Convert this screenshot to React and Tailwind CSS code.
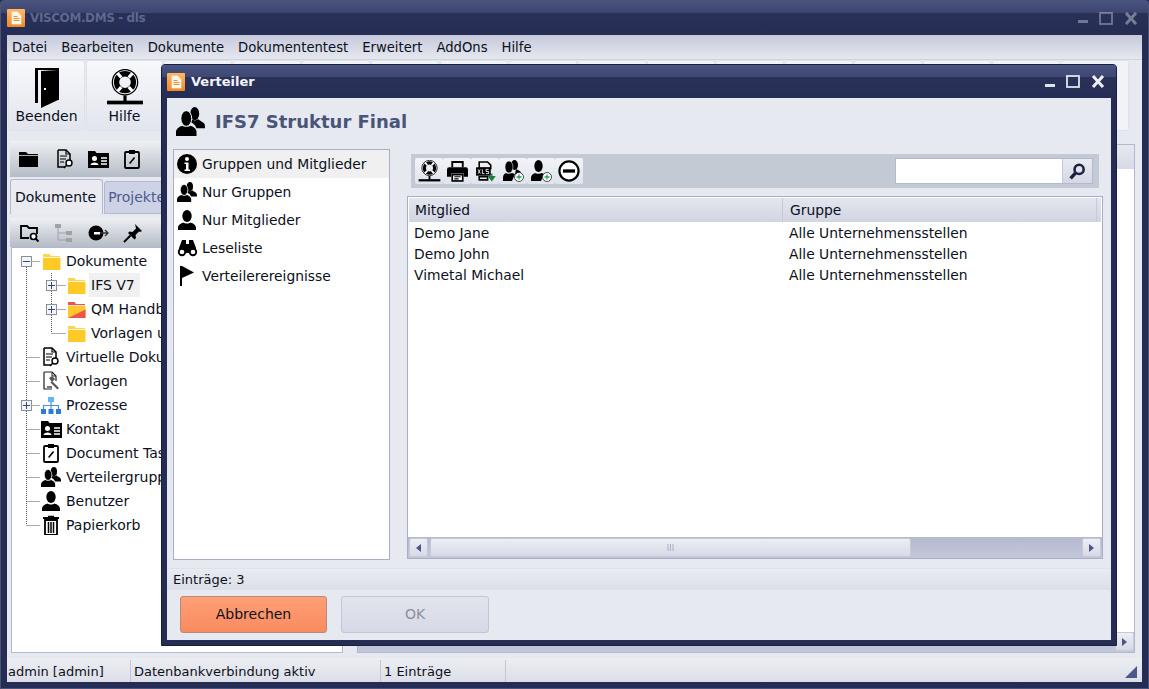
import React from "react";

const S = ({ w = 24, h = 24, vb = "0 0 24 24", children, className = "" }) => (
  <svg width={w} height={h} viewBox={vb} className={"shrink-0 " + className}>{children}</svg>
);

const Doc = () => (
  <S w={18} h={18} vb="0 0 18 18">
    <defs><linearGradient id="og" x1="0" y1="0" x2="0" y2="1"><stop offset="0" stopColor="#ffb866" /><stop offset="1" stopColor="#f08a2c" /></linearGradient></defs>
    <rect width="18" height="18" rx="1" fill="url(#og)" />
    <path d="M5 3h5.5L14 6.5V15H5z" fill="#fff4e2" stroke="#fff" strokeWidth=".6" />
    <path d="M6.5 7.5h4M6.5 9.5h6M6.5 11.5h6" stroke="#e0934a" strokeWidth="1" />
  </S>
);
const Door = () => (
  <S w={24} h={42} vb="0 0 24 42">
    <path d="M0 1h24v32h-2V3H3v33H0z" fill="#000" />
    <path d="M6 4l17-1v30L6 41z" fill="#000" />
    <rect x="9" y="21" width="2" height="2" fill="#fff" />
  </S>
);
const Buoy = ({ s = 36 }) => (
  <S w={s} h={s} vb="0 0 36 36">
    <circle cx="18" cy="12.500" r="8" fill="none" stroke="#000" strokeWidth="5" />
    <path d="M10.500 3.500l4 4.500M25.500 3.500l-4 4.500M10.500 21.500l4-4.500M25.500 21.500l-4-4.500" stroke="#fff" strokeWidth="3" />
    <circle cx="18" cy="12.500" r="12" fill="none" stroke="#000" strokeWidth="1.200" />
    <rect x="16.500" y="25" width="3" height="6" fill="#000" />
    <rect x="1" y="30" width="34" height="3.500" fill="#000" />
  </S>
);
const FolderBlack = () => (
  <S w={19} h={16} vb="0 0 19 16"><path d="M0 1h7l2 2h10v13H0z" fill="#000" /><path d="M0 4.500h19" stroke="#fff" strokeWidth=".7" /></S>
);
const DocSearch = ({ s = 20 }) => (
  <S w={s} h={s} vb="0 0 20 20">
    <path d="M3 1h8l4 4v6M3 1v17h7" fill="none" stroke="#000" strokeWidth="1.500" />
    <path d="M11 1v4h4M5 7h7M5 10h6M5 13h4" fill="none" stroke="#000" strokeWidth="1.200" />
    <circle cx="14" cy="14" r="3" fill="#fff" stroke="#000" strokeWidth="1.400" />
    <path d="M12 16l-3 3" stroke="#000" strokeWidth="1.600" />
  </S>
);
const Card = ({ w = 21, h = 17 }) => (
  <S w={w} h={h} vb="0 0 21 17">
    <path d="M0 0h7l1.500 2H21v15H0z" fill="#000" />
    <circle cx="6.500" cy="7.500" r="2.500" fill="#fff" />
    <path d="M2.500 14c0-3.500 8-3.500 8 0z" fill="#fff" />
    <path d="M13 7h6M13 10h6M13 13h6" stroke="#fff" strokeWidth="1.500" />
  </S>
);
const Clip = ({ s = 20 }) => (
  <S w={s} h={s} vb="0 0 20 20">
    <rect x="3" y="3" width="14" height="16" rx="1" fill="none" stroke="#000" strokeWidth="1.800" />
    <rect x="7" y="1" width="6" height="4" fill="#000" />
    <path d="M7 14l5-6 1.200 1-5 6z" fill="#000" />
  </S>
);
const FindFolder = () => (
  <S w={20} h={20} vb="0 0 20 20">
    <path d="M9 15H1V3h6l2 2h8v6" fill="none" stroke="#000" strokeWidth="1.800" />
    <circle cx="13.500" cy="13.500" r="3" fill="#fff" stroke="#000" strokeWidth="1.700" />
    <path d="M15.500 15.500l3 3" stroke="#000" strokeWidth="2" />
  </S>
);
const TreeGrey = () => (
  <S w={20} h={20} vb="0 0 20 20" >
    <rect x="1" y="1" width="6" height="4" fill="#9fa3a8" />
    <rect x="12" y="8" width="6" height="4" fill="#9fa3a8" />
    <rect x="12" y="15" width="6" height="4" fill="#9fa3a8" />
    <path d="M4 5v12h8M4 10h8" fill="none" stroke="#9fa3a8" />
  </S>
);
const CircleArrow = () => (
  <S w={21} h={20} vb="0 0 21 20">
    <circle cx="8" cy="10" r="7.500" fill="#000" />
    <rect x="6" y="9" width="6" height="2.500" fill="#fff" />
    <path d="M12 10h8M17 7l3 3-3 3" fill="none" stroke="#333" strokeWidth="1.300" />
  </S>
);
const Pin = () => (
  <S w={20} h={20} vb="0 0 20 20">
    <path d="M12 1l7 7-2 1-1-.5-3.500 3.500.5 3-1.500 1.500L5 10l1.500-1.500 3 .5L13 5.500 12.500 3z" fill="#000" />
    <path d="M7.500 12.500L1 19" stroke="#000" strokeWidth="2" />
  </S>
);
const Users = ({ s = 20 }) => (
  <S w={s} h={s} vb="0 0 24 24">
    <ellipse cx="15.500" cy="5.500" rx="3.700" ry="5.500" fill="#000" />
    <path d="M13 10c1 1.500 4 1.500 5.500 0 .5 1.500 5.500 2.500 5.500 5.500v2h-7c-1-2.500-3-4-5-5z" fill="#000" />
    <ellipse cx="8.500" cy="9.500" rx="4.500" ry="6.500" fill="#000" stroke="#fff" strokeWidth=".8" />
    <path d="M0 24v-3c0-3 2.500-4.500 5-5.500 1.500 1.200 5.500 1.200 7 0 3 1 5 2.500 5 5.500v3z" fill="#000" />
  </S>
);
const User = ({ s = 20 }) => (
  <S w={s} h={s} vb="0 0 20 20">
    <ellipse cx="10" cy="6" rx="4.700" ry="6" fill="#000" />
    <path d="M1 20v-2c0-3 2.500-4.500 5.500-5.500 1.500 1.300 5.500 1.300 7 0 3 1 5.500 2.500 5.500 5.500v2z" fill="#000" />
  </S>
);
const Info = () => (
  <S w={20} h={20} vb="0 0 20 20">
    <circle cx="10" cy="10" r="10" fill="#000" />
    <circle cx="10" cy="5" r="2" fill="#fff" />
    <path d="M7.500 8.500h4v7h1.500v1.500H7.500v-1.500H9v-5.500H7.500z" fill="#fff" />
  </S>
);
const Binoculars = () => (
  <S w={21} h={18} vb="0 0 21 18">
    <path d="M2 9l3-8h4v4h3V1h4l3 8v5H2z" fill="#000" />
    <circle cx="5" cy="13" r="4.200" fill="#000" />
    <circle cx="16" cy="13" r="4.200" fill="#000" />
    <circle cx="5" cy="13" r="2.300" fill="#fff" />
    <circle cx="16" cy="13" r="2.300" fill="#fff" />
  </S>
);
const Flag = () => (
  <S w={16} h={20} vb="0 0 16 20">
    <rect x="1" y="0" width="2" height="20" fill="#000" />
    <path d="M3 0l12 6.500L3 12z" fill="#000" />
  </S>
);
const Folder = ({ red }) => (
  <S w={19} h={17} vb="0 0 19 17">
    <path d="M1 1h6.500l1.500 2h9v3H1z" fill={red ? "#ef5350" : "#ffd54f"} />
    <rect x="1" y="5" width="17.500" height="12" fill="#ffca28" />
    {red && <path d="M18.500 8.500L1 17h17.500z" fill="#ef5350" />}
    <path d="M1 4.500h17.500" stroke="#fff" strokeWidth=".8" />
  </S>
);
const Gavel = () => (
  <S w={20} h={20} vb="0 0 20 20">
    <path d="M3 1h8l4 4v5M3 1v17h8" fill="none" stroke="#222" strokeWidth="1.200" />
    <path d="M11 1v4h4" fill="none" stroke="#222" />
    <path d="M8 7l3-2 3 3-3 3z" fill="#555" />
    <path d="M11 10l7 7-1.500 1.500-7-7z" fill="#555" />
    <path d="M6 15h5v2H6z" fill="#777" />
  </S>
);
const Org = () => (
  <S w={20} h={17} vb="0 0 20 17">
    <rect x="7" y="0" width="6" height="5" fill="#64b5f6" />
    <rect x="0" y="12" width="5" height="5" fill="#2f7ad6" />
    <rect x="7.500" y="12" width="5" height="5" fill="#2f7ad6" />
    <rect x="15" y="12" width="5" height="5" fill="#2f7ad6" />
    <path d="M10 5v7M2.500 12V8.500h15V12" fill="none" stroke="#4a90e2" strokeWidth="1.200" />
  </S>
);
const Trash = () => (
  <S w={18} h={20} vb="0 0 18 20">
    <path d="M6 2V.8h6V2h5v2H1V2z" fill="#000" />
    <path d="M3 5h12v15H3z" fill="none" stroke="#000" strokeWidth="1.800" />
    <path d="M6.500 7v11M9 7v11M11.500 7v11" stroke="#000" strokeWidth="1.500" />
  </S>
);
const Printer = () => (
  <S w={21} h={21} vb="0 0 20 20">
    <path d="M5 6V1h10v5" fill="none" stroke="#000" strokeWidth="1.800" />
    <path d="M2 6h16a2 2 0 0 1 2 2v7h-4v-3H4v3H0V8a2 2 0 0 1 2-2z" fill="#000" />
    <rect x="5" y="13" width="10" height="6" fill="#fff" stroke="#000" strokeWidth="1.600" />
    <path d="M7 15h6M7 17h4" stroke="#000" />
  </S>
);
const Xls = () => (
  <S w={21} h={21} vb="0 0 20 20">
    <path d="M4 1h8l3 3v3H4zM4 15h8v3H4z" fill="none" stroke="#000" strokeWidth="1.500" />
    <rect x="1" y="6" width="14" height="8" fill="#000" />
    <path d="M3 8l2 4M5 8l-2 4M7 8v4h2M13 8H10.500v2H13v2h-2.500" fill="none" stroke="#fff" strokeWidth=".8" />
    <path d="M16 12v5M13.500 15l2.500 3.500 2.500-3.500z" fill="#16803c" stroke="#16803c" strokeWidth="1.300" />
  </S>
);
const Plus = () => (
  <svg x="12" y="12" width="10" height="10" viewBox="0 0 10 10">
    <circle cx="5" cy="5" r="4.500" fill="#fff" stroke="#222" strokeWidth=".8" />
    <path d="M5 2.500v5M2.500 5h5" stroke="#22a35a" strokeWidth="1.300" />
  </svg>
);
const UsersAdd = () => (
  <S w={22} h={22} vb="0 0 22 22">
    <ellipse cx="12.500" cy="5" rx="3.500" ry="5" fill="#000" />
    <ellipse cx="7" cy="7" rx="4" ry="6" fill="#000" stroke="#e6e8ee" strokeWidth=".6" />
    <path d="M1 21v-3c0-3 1-4 3-5 1 1 4 1 6 0l3 1-3 7z" fill="#000" />
    <path d="M14 9c2 1 5 2 5 4v1h-6z" fill="#000" />
    <Plus />
  </S>
);
const UserAdd = () => (
  <S w={22} h={22} vb="0 0 22 22">
    <ellipse cx="8.500" cy="6" rx="4.200" ry="6" fill="#000" />
    <path d="M1 21v-3c0-3 2-4 4-5 1 1 5 1 7 0l2 1-3 7z" fill="#000" />
    <Plus />
  </S>
);
const MinusC = () => (
  <S w={22} h={22} vb="0 0 20 20">
    <circle cx="10" cy="10" r="8.700" fill="#fff" stroke="#000" strokeWidth="2" />
    <rect x="4.500" y="8.500" width="11" height="3" fill="#000" />
  </S>
);
const Search = () => (
  <S w={17} h={17} vb="0 0 16 16">
    <circle cx="9.500" cy="6" r="4.300" fill="none" stroke="#1c2240" strokeWidth="2.400" />
    <path d="M6 9.500L1.500 14.500" stroke="#1c2240" strokeWidth="3.200" />
  </S>
);
const Box = ({ minus, left }) => (
  <span className={"absolute w-[11px] h-[11px] border border-[#8a8f9c] bg-[#f4f5f8] flex items-center justify-center " + left}>
    <svg width="9" height="9" viewBox="0 0 9 9">
      <path d="M1 4.500h7" stroke="#2e4a8a" />
      {!minus && <path d="M4.500 1v7" stroke="#2e4a8a" />}
    </svg>
  </span>
);

const treeItems = [
  { t: "Dokumente", icon: <Folder />, pad: "pl-[29px]", box: "minus" },
  { t: "IFS V7", icon: <Folder />, pad: "pl-[55px]", box: "plus2", hi: true },
  { t: "QM Handbuch", icon: <Folder red />, pad: "pl-[55px]", box: "plus2" },
  { t: "Vorlagen und Muster", icon: <Folder />, pad: "pl-[55px]" },
  { t: "Virtuelle Dokumente", icon: <DocSearch />, pad: "pl-[29px]" },
  { t: "Vorlagen", icon: <Gavel />, pad: "pl-[29px]" },
  { t: "Prozesse", icon: <Org />, pad: "pl-[29px]", box: "plus" },
  { t: "Kontakt", icon: <Card />, pad: "pl-[29px]" },
  { t: "Document Tasks", icon: <Clip />, pad: "pl-[29px]" },
  { t: "Verteilergruppen", icon: <Users />, pad: "pl-[29px]" },
  { t: "Benutzer", icon: <User />, pad: "pl-[29px]" },
  { t: "Papierkorb", icon: <Trash />, pad: "pl-[29px]" },
];

const listItems = [
  ["Gruppen und Mitglieder", <Info />],
  ["Nur Gruppen", <Users />],
  ["Nur Mitglieder", <User />],
  ["Leseliste", <Binoculars />],
  ["Verteilerereignisse", <Flag />],
];

const members = ["Demo Jane", "Demo John", "Vimetal Michael"];

const RibbonBtn = ({ icon, label }) => (
  <div className="w-[77px] h-[71px] rounded-[3px] border border-[#dfe2ea] bg-gradient-to-b from-[#f7f8fb] to-[#e2e5ed] flex flex-col items-center pt-[6px] text-[14px] leading-[16px]">
    <div className="h-[42px] shrink-0 flex items-center">{icon}</div>
    <span className="-mt-[1px]">{label}</span>
  </div>
);

const Tb = ({ children }) => (
  <div className="w-[28px] h-[26px] rounded-[2px] bg-gradient-to-b from-[#f2f4f7] to-[#dfe3ec] flex items-center justify-center">{children}</div>
);

const Arrow = ({ right }) => (
  <div className="w-[19px] h-[19px] rounded-[2px] border border-[#c5c9d8] bg-gradient-to-b from-[#eceef3] to-[#d7dae6] flex items-center justify-center">
    <svg width="5" height="8" viewBox="0 0 5 8"><path d={right ? "M0 0l5 4-5 4z" : "M5 0L0 4l5 4z"} fill="#4a5489" /></svg>
  </div>
);

const WinBtns = ({ dim }) => (
  <div className={"flex items-center gap-[11px] " + (dim ? "opacity-40" : "")}>
    <svg width="10" height="10" viewBox="0 0 10 10"><rect y="7" width="10" height="3" fill="#dfe3ee" /></svg>
    <svg width="14" height="13" viewBox="0 0 14 13"><rect x="1" y="1" width="12" height="11" fill="none" stroke="#dfe3ee" strokeWidth="1.800" /></svg>
    <svg width="14" height="13" viewBox="0 0 14 13"><path d="M2 1l10 11M12 1L2 12" stroke="#eef0f6" strokeWidth="3" /></svg>
  </div>
);

export default function App() {
  return (
    <div className="relative w-[1149px] h-[689px] overflow-hidden bg-[#262d55] text-[#0c1020] text-[14px]" style={{ fontFamily: '"DejaVu Sans", sans-serif' }}>
      {/* main window */}
      <div className="flex flex-col h-full border border-[#4b5478] rounded-t-[4px]">
        <div className="h-[34px] shrink-0 flex items-center justify-between pl-[6px] pr-[10px] bg-[linear-gradient(#4a5480_0,#3b4570_35%,#2a3159_36%,#262d55_100%)]">
          <div className="flex items-center gap-[5px]">
            <Doc />
            <span className="font-bold text-[12px] tracking-[-0.4px] text-[#5d688f]">VISCOM.DMS - dls</span>
          </div>
          <WinBtns dim />
        </div>
        <div className="flex-1 flex flex-col mx-[6px] mb-[6px] bg-[#e6e9ef] min-h-0">
          <div className="h-[25px] shrink-0 flex items-center gap-[14px] pl-[5px] pt-[2px] text-[13.2px] bg-gradient-to-b from-[#c5c9db] to-[#e6e8ef] border-b border-[#d0d4e0]">
            {["Datei", "Bearbeiten", "Dokumente", "Dokumententest", "Erweitert", "AddOns", "Hilfe"].map((m) => (
              <span key={m}>{m}</span>
            ))}
          </div>
          <div className="h-[73px] shrink-0 flex gap-[1px] pl-[1px] bg-[#e6e9ef]">
            <RibbonBtn icon={<Door />} label="Beenden" />
            <RibbonBtn icon={<Buoy s={38} />} label="Hilfe" />
            {Array.from({ length: 14 }).map((_, i) => (
              <div key={i} className="w-[68px] h-[71px] rounded-[3px] border border-[#dfe2ea] bg-[#f2f3f7]" />
            ))}
          </div>
          <div className="flex-1 flex min-h-0 pt-[8px]">
            {/* left panel */}
            <div className="w-[335px] shrink-0 flex flex-col pl-[3px] pb-[5px]">
              <div className="h-[36px] shrink-0 flex items-center pl-[9px] bg-gradient-to-b from-[#eef0f3] to-[#b5bcc6] mr-[1px]">
                <FolderBlack />
                <span className="ml-[17px] flex"><DocSearch /></span>
                <span className="ml-[13px] flex"><Card /></span>
                <span className="ml-[13px] flex"><Clip /></span>
              </div>
              <div className="h-[37px] shrink-0 flex items-end pt-[3px]">
                <div className="h-[35px] pl-[4px] pr-[6px] flex items-center border border-b-0 border-[#b3b8d0] rounded-t-[3px] bg-[#e9ebf1]">Dokumente</div>
                <div className="h-[33px] pl-[3px] pr-[20px] flex items-center border border-[#b3b8d0] rounded-t-[3px] bg-[#cdd2e6] text-[#4f5a8d] ml-[1px]">Projekte</div>
              </div>
              <div className="h-[29px] shrink-0 flex items-center gap-[14px] pl-[10px] bg-gradient-to-b from-[#eef0f3] to-[#b5bcc6] mt-[4px] mr-[1px]">
                <FindFolder />
                <TreeGrey />
                <CircleArrow />
                <Pin />
              </div>
              <div className="relative flex-1 ml-[1px] mr-[-1px] bg-white border border-[#b3b8d0] pt-[1px]">
                <svg className="absolute left-0 top-0" width="120" height="300">
                  <path d="M14.500 13V277M14.500 13.500H28M14.500 109.500H28M14.500 133.500H28M14.500 157.500H28M14.500 181.500H28M14.500 205.500H28M14.500 229.500H28M14.500 253.500H28M14.500 277.500H28M39.500 25V85M39.500 37.500H54M39.500 61.500H54M39.500 85.500H54" stroke="#555" strokeDasharray="1 1" fill="none" />
                </svg>
                {treeItems.map((it) => (
                  <div key={it.t} className={"relative h-[24px] flex items-center gap-[5px] " + it.pad}>
                    {it.box === "minus" && <Box minus left="left-[9px]" />}
                    {it.box === "plus" && <Box left="left-[9px]" />}
                    {it.box === "plus2" && <Box left="left-[34px]" />}
                    <span className={(it.pad === "pl-[55px]" ? "w-[19px]" : "w-[20px]") + " flex justify-center relative"}>{it.icon}</span>
                    <span className={"whitespace-nowrap leading-[24px] " + (it.hi ? "bg-[#f0f0f0] -ml-[2px] pl-[2px] pr-[5px]" : "")}>{it.t}</span>
                  </div>
                ))}
              </div>
            </div>
            <div className="flex-1 flex flex-col pl-[15px] pr-[7px] pb-[5px] pt-[3px]">
              <div className="flex-1 flex flex-col border border-[#b3b8d0] bg-white">
                <div className="h-[24px] bg-gradient-to-b from-[#e7e9f0] to-[#d6d9e6]" />
                <div className="flex-1" />
                <div className="h-[20px] bg-gradient-to-b from-[#b6bad0] to-[#c3c7da] flex justify-end"><Arrow right /></div>
              </div>
            </div>
          </div>
          <div className="h-[24px] shrink-0 flex items-end text-[13px] bg-gradient-to-b from-[#eceef3] to-[#dcdfe8] relative">
            <div className="w-[124px] pl-[1px] pt-[2px] h-[22px] flex items-center border-r border-[#c2c6d6]">admin [admin]</div>
            <div className="w-[250px] pl-[3px] pt-[2px] h-[22px] flex items-center border-r border-[#c2c6d6]">Datenbankverbindung aktiv</div>
            <div className="w-[125px] pl-[3px] pt-[2px] h-[22px] flex items-center border-r border-[#c2c6d6]">1 Einträge</div>
            <svg className="absolute right-[5px] bottom-[4px]" width="12" height="12" viewBox="0 0 12 12"><path d="M12 0v12H0z" fill="#4d5689" /></svg>
          </div>
        </div>
      </div>

      {/* dialog window */}
      <div className="absolute left-[161px] top-[64px] w-[956px] h-[582px] flex flex-col bg-[#262d55] border border-[#1a1f40] rounded-t-[4px]">
        <div className="h-[33px] shrink-0 flex items-center justify-between pl-[5px] pr-[11px] bg-[linear-gradient(#4a5480_0,#3e4873_35%,#2b325a_36%,#262d55_100%)]">
          <div className="flex items-center gap-[6px]">
            <Doc />
            <span className="font-bold text-[13px] text-[#f2f4fa]">Verteiler</span>
          </div>
          <WinBtns />
        </div>
        <div className="flex-1 flex flex-col mx-[5px] mb-[5px] bg-[#e6e9ef] min-h-0">
          <div className="h-[45px] shrink-0 flex items-center gap-[10px] pl-[9px] pt-[2px]">
            <Users s={29} />
            <span className="font-bold text-[18px] text-[#4a5478]">IFS7 Struktur Final</span>
          </div>
          <div className="h-[415px] shrink-0 flex">
            <div className="ml-[6px] mt-[6px] w-[217px] h-[411px] bg-white border border-[#a9aec6]">
              {listItems.map(([t, ic], i) => (
                <div key={t} className={"h-[28px] flex items-center gap-[5px] pl-[3px] text-[13.85px] " + (i === 0 ? "bg-[#f0f0f0]" : "")}>
                  <span className="w-[20px] flex justify-center">{ic}</span>
                  <span>{t}</span>
                </div>
              ))}
            </div>
            <div className="ml-[17px] w-[696px] flex flex-col pt-[11px]">
              <div className="ml-[4px] w-[688px] h-[34px] shrink-0 flex items-center justify-between pl-[4px] pr-[6px] bg-[#c3cad4]">
                <div className="flex">
                  <Tb><Buoy s={23} /></Tb>
                  <Tb><Printer /></Tb>
                  <Tb><Xls /></Tb>
                  <Tb><UsersAdd /></Tb>
                  <Tb><UserAdd /></Tb>
                  <Tb><MinusC /></Tb>
                </div>
                <div className="w-[198px] h-[26px] flex bg-white border border-[#b4b9cf]">
                  <div className="flex-1" />
                  <div className="w-[30px] flex items-center justify-center border-l border-[#c5c9d8] bg-gradient-to-b from-[#e9ebf1] to-[#d5d8e5]"><Search /></div>
                </div>
              </div>
              <div className="mt-[8px] h-[363px] shrink-0 flex flex-col bg-white border border-[#a9aec6] text-[13.85px]">
                <div className="h-[24px] shrink-0 flex mx-[1px] mt-[1px] bg-gradient-to-b from-[#e4e6ee] to-[#d1d5e3]">
                  <div className="w-[374px] pl-[6px] flex items-center border-r border-[#c5c9d8]">Mitglied</div>
                  <div className="w-[314px] pl-[7px] flex items-center border-r border-[#c5c9d8]">Gruppe</div>
                </div>
                <div className="flex-1 pt-[1px]">
                  {members.map((m) => (
                    <div key={m} className="h-[21px] flex items-center">
                      <div className="w-[375px] pl-[6px]">{m}</div>
                      <div className="pl-[6px]">Alle Unternehmensstellen</div>
                    </div>
                  ))}
                </div>
                <div className="h-[21px] shrink-0 flex items-center bg-gradient-to-b from-[#b5b9cf] to-[#c3c7da] px-[1px]">
                  <Arrow />
                  <div className="ml-[2px] w-[481px] h-[19px] rounded-[2px] border border-[#c5c9d8] bg-gradient-to-b from-[#eceef3] to-[#d7dae6] flex items-center justify-center">
                    <svg width="7" height="7"><path d="M1 0v7M3.500 0v7M6 0v7" stroke="#a9aec6" /></svg>
                  </div>
                  <div className="flex-1" />
                  <Arrow right />
                </div>
              </div>
            </div>
          </div>
          <div className="mt-[10px] h-[22px] shrink-0 flex items-center pl-[6px] text-[13px] bg-gradient-to-b from-[#e9ebf2] to-[#dcdfe7] border-t border-[#dfe2ea]">Einträge: 3</div>
          <div className="flex-1 flex items-start gap-[14px] pl-[13px] pt-[6px]">
            <div className="w-[147px] h-[37px] rounded-[3px] border border-[#b88b78] bg-gradient-to-b from-[#ff9f75] to-[#f98b5f] flex items-center justify-center">Abbrechen</div>
            <div className="w-[148px] h-[37px] rounded-[3px] border border-[#c2c6d6] bg-gradient-to-b from-[#e3e5ed] to-[#d6d9e5] flex items-center justify-center text-[#8b8f97]">OK</div>
          </div>
        </div>
      </div>
    </div>
  );
}
